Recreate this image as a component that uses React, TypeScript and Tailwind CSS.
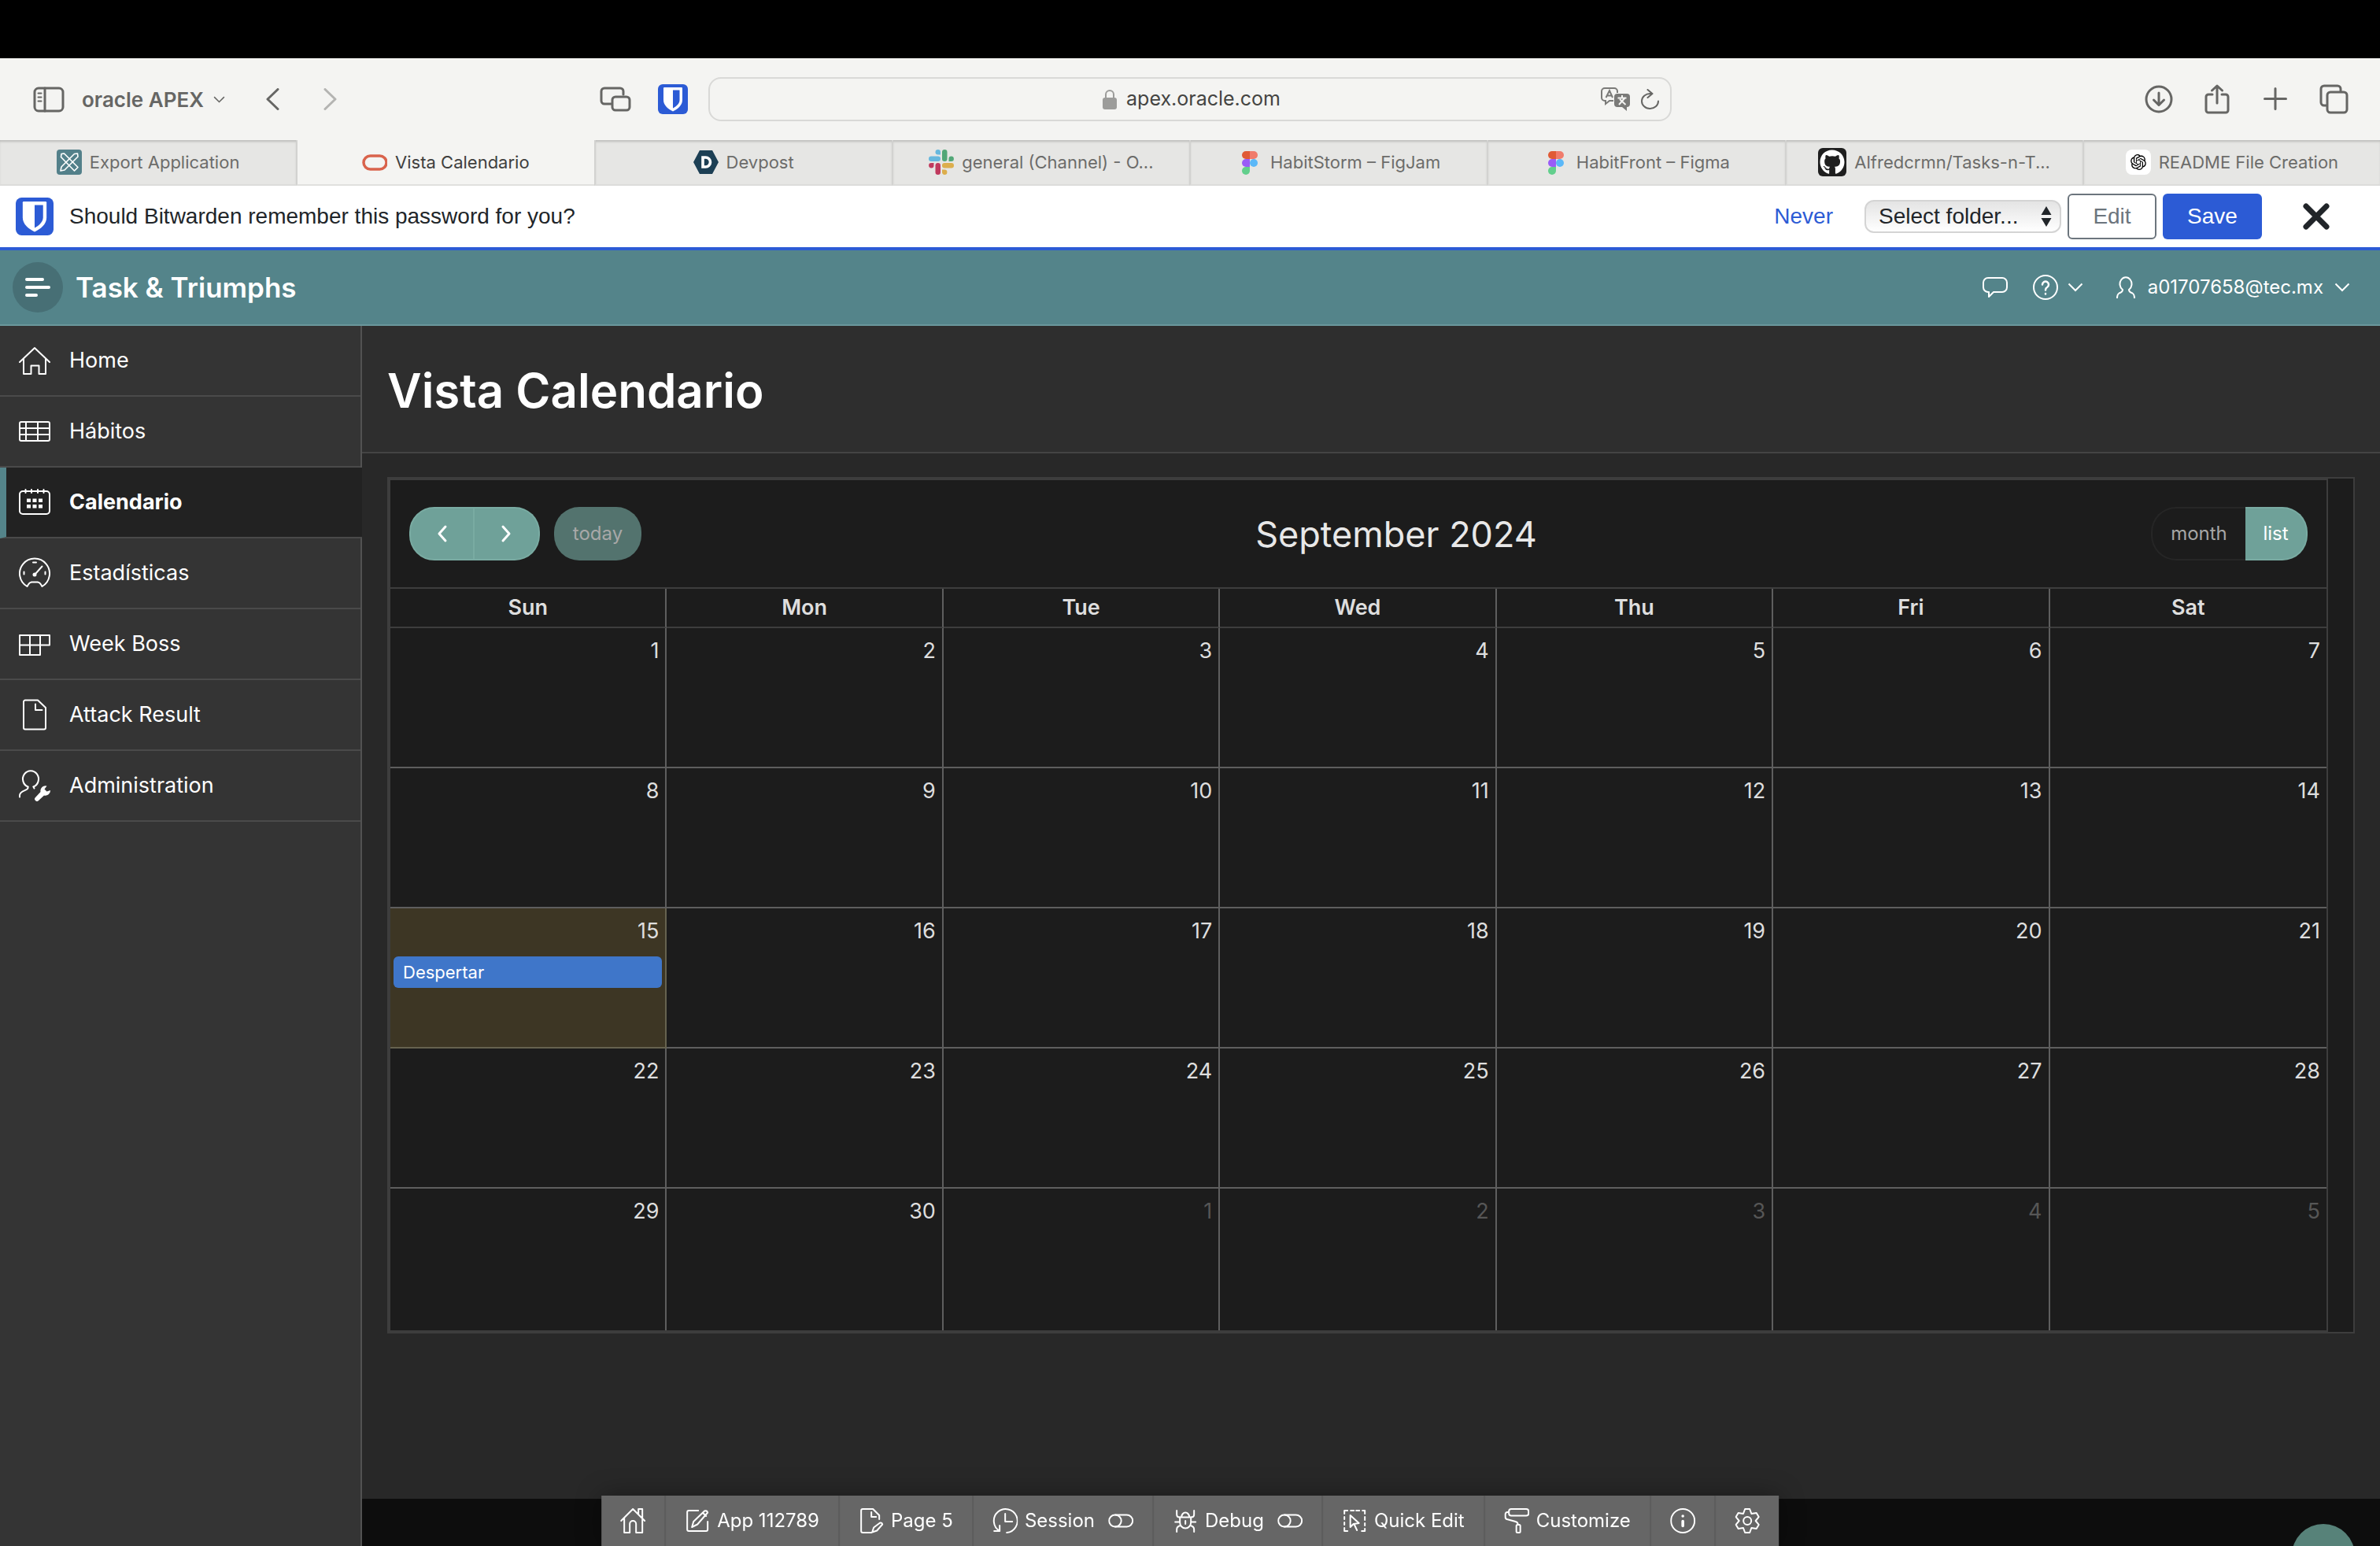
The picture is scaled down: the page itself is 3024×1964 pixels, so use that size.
import type { ReactNode } from 'react';
import { FaGithub } from 'react-icons/fa';
import { RiOpenaiFill } from 'react-icons/ri';

const navItems = [
  { label: 'Home', icon: <HomeIcon /> },
  { label: 'Hábitos', icon: <TableIcon /> },
  { label: 'Calendario', icon: <CalendarIcon />, active: true },
  { label: 'Estadísticas', icon: <GaugeIcon /> },
  { label: 'Week Boss', icon: <CardsIcon /> },
  { label: 'Attack Result', icon: <FileIcon /> },
  { label: 'Administration', icon: <UserWrenchIcon /> },
];

const browserTabs = [
  { title: 'Export Application', icon: <ApexFavicon /> },
  { title: 'Vista Calendario', icon: <OracleFavicon />, active: true },
  { title: 'Devpost', icon: <DevpostFavicon /> },
  { title: 'general (Channel) - O...', icon: <SlackFavicon /> },
  { title: 'HabitStorm – FigJam', icon: <FigmaFavicon /> },
  { title: 'HabitFront – Figma', icon: <FigmaFavicon /> },
  {
    title: 'Alfredcrmn/Tasks-n-T...',
    icon: (
      <span className="flex size-9 items-center justify-center rounded-md bg-[#1f1f1f] text-white">
        <FaGithub className="size-8" />
      </span>
    ),
  },
  {
    title: 'README File Creation',
    icon: (
      <span className="flex size-8 items-center justify-center rounded-lg bg-white text-black">
        <RiOpenaiFill className="size-6" />
      </span>
    ),
  },
];

const weekdays = ['Sun', 'Mon', 'Tue', 'Wed', 'Thu', 'Fri', 'Sat'];

const weeks = [
  [1, 2, 3, 4, 5, 6, 7],
  [8, 9, 10, 11, 12, 13, 14],
  [15, 16, 17, 18, 19, 20, 21],
  [22, 23, 24, 25, 26, 27, 28],
  [29, 30, 1, 2, 3, 4, 5],
];

/* Shared frame for line icons */
function Line({ size, width = 2, className, children }: { size: number; width?: number; className?: string; children: ReactNode }) {
  return (
    <svg
      width={size}
      height={size}
      viewBox={`0 0 ${size} ${size}`}
      fill="none"
      stroke="currentColor"
      strokeWidth={width}
      strokeLinecap="round"
      strokeLinejoin="round"
      className={className}
      aria-hidden="true"
    >
      {children}
    </svg>
  );
}

/* Sidebar icons */
function HomeIcon() {
  return (
    <Line size={40}>
      <path d="M1 22 20 4l19 18" />
      <path d="M6 18v19h9.5V26.5h10V37H34V18" />
    </Line>
  );
}

function TableIcon() {
  return (
    <Line size={40}>
      <rect x="1" y="8" width="38" height="24" rx="2" />
      <path d="M9 8v24M24 8v24M1 16h38M1 24h38" />
    </Line>
  );
}

function CalendarIcon() {
  return (
    <Line size={40}>
      <rect x="1" y="6" width="38" height="29" rx="4" />
      <path d="M8.500 4v4M16 4v4M24 4v4M31.5 4v4" />
      <path
        d="M10 15.5h5V20h-5zM17.5 15.5h5V20h-5zM25 15.5h5V20h-5zM10 23h5v4.5h-5zM17.5 23h5v4.5h-5zM25 23h5v4.5h-5z"
        fill="currentColor"
        stroke="none"
      />
    </Line>
  );
}

function GaugeIcon() {
  return (
    <Line size={40}>
      <path d="M10.5 37A19 19 0 1 1 29.5 37L28 34.5a6 6 0 0 0-4-3h-8a6 6 0 0 0-4 3z" />
      <path d="M21 21l8.5-9.5M18 6.5h4M6.5 18.5v3M33.5 18.5v3" />
      <circle cx="20" cy="22" r="1.5" fill="currentColor" />
    </Line>
  );
}

function CardsIcon() {
  return (
    <Line size={40}>
      <path d="M1 9h38v12.500H27V34H1zM14 9v25M27 9v12.500M1 21.500h26" />
    </Line>
  );
}

function FileIcon() {
  return (
    <Line size={40}>
      <path d="M24 1.5H8a2 2 0 0 0-2 2v33a2 2 0 0 0 2 2h24a2 2 0 0 0 2-2V11z" />
      <path d="M21 6.5V14h8.5" />
    </Line>
  );
}

function UserWrenchIcon() {
  return (
    <Line size={40}>
      <path d="M11.5 21.5a10 10.5 0 1 1 7 0" />
      <path d="M11.5 21.5V23c0 3.5-10.5 3-10.5 9.5v2M18.5 21.5l1 2" />
      <path
        d="M35.5 20.5a6.500 6.500 0 0 0-8 7.5l-6.500 7a2.800 2.800 0 1 0 4 4l7-6.500a6.500 6.500 0 0 0 8-6.500l-4.500 1.500-3-3z"
        fill="currentColor"
        stroke="none"
      />
    </Line>
  );
}

/* Favicons and logos */
function BitwardenLogo({ className }: { className: string }) {
  return (
    <svg viewBox="0 0 38 38" className={className} aria-hidden="true">
      <rect width="38" height="38" rx="6" fill="#2c5bd5" />
      <path d="M8 4h22a1 1 0 0 1 1 1v15c0 7-6 11.5-12 14.5C13 31.5 7 27 7 20V5a1 1 0 0 1 1-1z" fill="#fff" />
      <path d="M19 7.5h8.5V20c0 4.5-4 8-8.5 10.5z" fill="#2c5bd5" />
    </svg>
  );
}

function ApexFavicon() {
  return (
    <svg viewBox="0 0 32 32" className="size-8" aria-hidden="true">
      <rect width="32" height="32" rx="4" fill="#53808a" />
      <g fill="none" stroke="#fff" strokeWidth="1.6" strokeLinejoin="round">
        <path d="M6 5.5 9.5 5 27 22.5 22.5 27 5.5 9.5z" />
        <path d="M26.5 5 27 9 10 26l-5 1 1-5L22.5 5.5z" />
      </g>
    </svg>
  );
}

function OracleFavicon() {
  return (
    <svg viewBox="0 0 32 32" className="size-8" aria-hidden="true">
      <rect x="2" y="8" width="29" height="17" rx="8.5" fill="none" stroke="#d9634c" strokeWidth="3.5" />
    </svg>
  );
}

function DevpostFavicon() {
  return (
    <svg viewBox="0 0 32 32" className="size-8" aria-hidden="true">
      <path d="M8 1h16l8 15-8 15H8L0 16z" fill="#1c3f54" />
      <path d="M12 10h3.5a6 6 0 0 1 0 12H12z" fill="none" stroke="#fff" strokeWidth="3.6" />
    </svg>
  );
}

function SlackFavicon() {
  return (
    <svg viewBox="0 0 32 32" className="size-8" aria-hidden="true">
      <g fill="#67b8de">
        <rect x="0" y="8.5" width="15" height="6.5" rx="3.2" />
        <path d="M11.8 0A3.2 3.2 0 0 1 15 3.2v3.3h-3.2a3.2 3.2 0 0 1 0-6.5z" />
      </g>
      <g fill="#52a777">
        <rect x="17" y="0" width="6.5" height="15" rx="3.2" />
        <path d="M25.5 15v-3.2a3.2 3.2 0 1 1 3.3 3.2z" />
      </g>
      <g fill="#dcae4c">
        <rect x="17" y="17" width="15" height="6.5" rx="3.2" />
        <path d="M17 25.5h3.2a3.2 3.2 0 1 1-3.2 3.3z" />
      </g>
      <g fill="#c03a5d">
        <rect x="8.5" y="17" width="6.5" height="15" rx="3.2" />
        <path d="M6.5 17v3.2A3.2 3.2 0 1 1 3.2 17z" />
      </g>
    </svg>
  );
}

function FigmaFavicon() {
  return (
    <svg viewBox="0 0 32 32" className="size-8" aria-hidden="true">
      <path d="M16 2v10h-5a5 5 0 0 1 0-10z" fill="#e05a35" />
      <path d="M16 2h5a5 5 0 0 1 0 10h-5z" fill="#f07c6c" />
      <path d="M16 12v10h-5a5 5 0 0 1 0-10z" fill="#9a5cf7" />
      <circle cx="21" cy="17" r="5" fill="#5bb8f8" />
      <path d="M16 22v5a5 5 0 1 1-5-5z" fill="#62cf8c" />
    </svg>
  );
}

/* Developer toolbar icons */
function ToggleIcon() {
  return (
    <Line size={32}>
      <rect x="1" y="8.5" width="30" height="15" rx="7.5" />
      <path d="M9 8.5a7.5 7.5 0 0 1 0 15" />
    </Line>
  );
}

const devItems = [
  {
    name: 'Home',
    icon: (
      <Line size={32}>
        <path d="M1 16 16 1l15 15M5 12.5V31h7V20a4 4 0 0 1 8 0v11h8V12.5M23 7V1h5v11" />
      </Line>
    ),
  },
  {
    name: 'App',
    text: 'App 112789',
    icon: (
      <Line size={32}>
        <path d="M17 3H5a2 2 0 0 0-2 2v22a2 2 0 0 0 2 2h22a2 2 0 0 0 2-2V17" />
        <path d="M9 24l2-7L25 3.5q3-1 4 2L16 20.5zM23 6l4 4" />
      </Line>
    ),
  },
  {
    name: 'Page',
    text: 'Page 5',
    icon: (
      <Line size={32}>
        <path d="M16 31H5a2 2 0 0 1-2-2V3a2 2 0 0 1 2-2h13l8 8v5M16 5v6h6" />
        <path d="M17 30.5l2-6 8-6q2.5-.5 3 2l-7 8z" />
      </Line>
    ),
  },
  {
    name: 'Session',
    text: 'Session',
    toggle: true,
    icon: (
      <Line size={32}>
        <path d="M9 29A15 15 0 1 1 18 31M16 7v10h9M9 22v7H2" />
      </Line>
    ),
  },
  {
    name: 'Debug',
    text: 'Debug',
    toggle: true,
    icon: (
      <Line size={32}>
        <path d="M9 11.5h14V18a7 7.5 0 0 1-14 0zM11 11.5a5 6 0 0 1 10 0M16 16v4M3 17.5h6M23 17.5h6" />
        <path d="M5 3v5q0 3.5 4 3.5M27 3v5q0 3.5-4 3.5M5 30v-3q0-4 5-5M27 30v-3q0-4-5-5" />
      </Line>
    ),
  },
  {
    name: 'Quick Edit',
    text: 'Quick Edit',
    icon: (
      <Line size={32}>
        <path d="M3 7V3h4M11 3h4M18 3h4M26 3h3v4M29 11v4M29 19v3M29 26v3h-4M7 29H3v-4M3 21v-3M3 14v-3" />
        <path d="M10.5 9v15l4-4 7-1zM15.5 20.5l3.500 7.500" />
      </Line>
    ),
  },
  {
    name: 'Customize',
    text: 'Customize',
    icon: (
      <Line size={32}>
        <rect x="6" y="1" width="25" height="8.5" rx="3" />
        <path d="M6 5H4a2.500 2.500 0 0 0-2.500 2.500v3.500a3 3 0 0 0 2 3l11 3a4 4 0 0 1 3 4" />
        <rect x="15.500" y="21" width="5" height="10" rx="1.500" />
      </Line>
    ),
  },
  {
    name: 'Info',
    icon: (
      <Line size={32}>
        <circle cx="16" cy="16" r="15" />
        <path d="M16 16.500v6M16 10v0" strokeWidth="3.600" />
      </Line>
    ),
  },
  {
    name: 'Settings',
    icon: (
      <Line size={32}>
        <circle cx="16" cy="16" r="5" />
        <path d="M13 1h6l2.200 6 6.300-1.100 3 5.200-4 4.900 4 4.900-3 5.200-6.300-1.100L19 31h-6l-2.200-6-6.300 1.100-3-5.200 4-4.900-4-4.900 3-5.200L10.800 7z" />
      </Line>
    ),
  },
];

function Chevron({ className }: { className: string }) {
  return (
    <svg viewBox="0 0 20 12" fill="none" stroke="currentColor" strokeWidth="2" className={className} aria-hidden="true">
      <path d="M1.5 1.5 10 10l8.5-8.5" />
    </svg>
  );
}

function BrowserToolbar() {
  return (
    <div className="grid h-[104px] grid-cols-[900px_1fr_900px] items-center bg-[#f4f4f2] text-[#666664]">
      <div className="flex items-center pl-[42px] pr-[26px]">
        <button aria-label="Sidebar">
          <Line size={40} width={3}>
            <rect x="2" y="6" width="36" height="29" rx="5" />
            <path d="M15 6v29" />
            <path d="M6.5 12.5h4M6.5 17.5h4M6.5 22.5h4" strokeWidth="2" />
          </Line>
        </button>
        <button className="ml-[22px] flex items-center gap-3 text-[26px] font-semibold">
          oracle APEX
          <Chevron className="h-[9px] w-[15px]" />
        </button>
        <button aria-label="Back" className="ml-12">
          <Line size={28} width={3}>
            <path d="M19 1.5 6 14l13 12.500" />
          </Line>
        </button>
        <button aria-label="Forward" className="ml-[42px] text-[#b4b4b2]">
          <Line size={28} width={3}>
            <path d="M9 1.5 22 14 9 26.5" />
          </Line>
        </button>
        <button aria-label="Tab overview" className="ml-auto">
          <Line size={40} width={3}>
            <path d="M15 26H6a4 4 0 0 1-4-4V10a4 4 0 0 1 4-4h20a4 4 0 0 1 4 4v4" />
            <rect x="16" y="17" width="22" height="17" rx="4" />
          </Line>
        </button>
        <button aria-label="Bitwarden" className="ml-[34px]">
          <BitwardenLogo className="size-[38px]" />
        </button>
      </div>
      <div className="flex h-14 items-center rounded-2xl border-2 border-[#d9d9d7] px-3">
        <div className="w-20" />
        <div className="flex flex-1 items-center justify-center gap-3">
          <svg viewBox="0 0 18 26" className="h-[26px] w-[18px] text-[#9c9c9a]" aria-hidden="true">
            <rect y="11" width="18" height="15" rx="3" fill="currentColor" />
            <path d="M4 12V7a5 5 0 0 1 10 0v5" fill="none" stroke="currentColor" strokeWidth="2" />
          </svg>
          <input
            aria-label="Address"
            defaultValue="apex.oracle.com"
            className="field-sizing-content bg-transparent text-[25px] text-[#444442] outline-none"
          />
        </div>
        <button aria-label="Translate" className="mr-3 text-[#7a7a78]">
          <svg viewBox="0 0 38 30" className="h-[30px] w-[38px]" aria-hidden="true">
            <path
              d="M16 17h-5l-5 4v-4H5a4 4 0 0 1-4-4V5a4 4 0 0 1 4-4h12a4 4 0 0 1 4 4v2M6.5 13 11 4l4 9M8 10.5h6"
              fill="none"
              stroke="currentColor"
              strokeWidth="2"
            />
            <path d="M21 8h12a4 4 0 0 1 4 4v9a4 4 0 0 1-4 4v5l-6-5h-6a4 4 0 0 1-4-4v-9a4 4 0 0 1 4-4z" fill="currentColor" />
            <path d="M27 10v3M21.5 13.5h11M23 22l7.5-8.5M24 15l7.5 7" fill="none" stroke="#f4f4f2" strokeWidth="2" />
          </svg>
        </button>
        <button aria-label="Reload">
          <Line size={26}>
            <path d="M13 6A10.5 9.5 0 1 0 23 15.500M9.500 1l6 5-6 5" />
          </Line>
        </button>
      </div>
      <div className="flex items-center justify-end gap-9 pr-10">
        <button aria-label="Downloads">
          <Line size={38} width={3}>
            <circle cx="19" cy="19" r="16" />
            <path d="M19 11v15M12.5 20l6.5 6.5 6.5-6.5" />
          </Line>
        </button>
        <button aria-label="Share">
          <Line size={38} width={3}>
            <path d="M13 13H8a3 3 0 0 0-3 3v17a3 3 0 0 0 3 3h22a3 3 0 0 0 3-3V16a3 3 0 0 0-3-3h-5M19 24V2M12.5 8 19 2l6.5 6" />
          </Line>
        </button>
        <button aria-label="New tab">
          <Line size={38} width={3}>
            <path d="M19 5.500v26M5.500 18.500h27" />
          </Line>
        </button>
        <button aria-label="All tabs">
          <Line size={38} width={3}>
            <path d="M10 27H7a4 4 0 0 1-4-4V6a4 4 0 0 1 4-4h17a4 4 0 0 1 4 4v3" />
            <rect x="11" y="10" width="25" height="26" rx="4" />
          </Line>
        </button>
      </div>
    </div>
  );
}

function BrowserTabs() {
  return (
    <div className="flex h-[58px] bg-[#e6e6e4]">
      {browserTabs.map((tab) => (
        <a
          key={tab.title}
          href="#"
          className={
            tab.active
              ? 'flex flex-1 items-center justify-center gap-2.5 border-b-2 border-l-2 border-b-[#e0e0de] border-l-[#d2d2d0] bg-[#f4f4f2] text-[22px] text-[#40403e]'
              : 'flex flex-1 items-center justify-center gap-2.5 border-b-2 border-l-2 border-b-[#dcdcda] border-l-[#d2d2d0] text-[22px] text-[#6c6c6a] shadow-[inset_0_3px_3px_-1px_#bcbcba] first:border-l-0'
          }
        >
          {tab.icon}
          {tab.title}
        </a>
      ))}
    </div>
  );
}

function PasswordBar() {
  return (
    <div className="flex h-[82px] items-center border-b-4 border-[#2c5bd5] bg-white pl-5 pr-16 font-['Liberation_Sans',Arial,sans-serif] text-[28px] text-[#212529]">
      <BitwardenLogo className="size-12" />
      <p className="ml-5">Should Bitwarden remember this password for you?</p>
      <button className="ml-auto mr-10 text-[#2c5bd5]">Never</button>
      <div className="relative mr-2">
        <select
          aria-label="Folder"
          className="block h-[42px] w-[250px] appearance-none rounded-xl border-2 border-[#d4d4d4] bg-linear-to-b from-[#e4e4e4] to-white pl-4 text-[28px] leading-none"
        >
          <option>Select folder...</option>
        </select>
        <svg viewBox="0 0 14 26" className="pointer-events-none absolute right-3 top-2 h-[26px] w-[14px]" fill="currentColor" aria-hidden="true">
          <path d="M7 0l6.500 11H.5zM7 26l6.500-11H.5z" />
        </svg>
      </div>
      <button className="mr-2 h-[58px] w-[113px] rounded-md border-2 border-[#6c757d] text-[#6c757d]">Edit</button>
      <button className="h-[58px] w-[126px] rounded-md bg-[#2c5bd5] text-white">Save</button>
      <button aria-label="Close" className="ml-[52px]">
        <svg viewBox="0 0 34 34" className="size-[34px]" stroke="currentColor" strokeWidth="7" strokeLinecap="round" aria-hidden="true">
          <path d="M4 4l26 26M30 4 4 30" />
        </svg>
      </button>
    </div>
  );
}

function AppHeader() {
  return (
    <header className="flex h-24 items-center border-b-2 border-[#6a979b] bg-[#54848a] pl-4 pr-[38px] text-white">
      <button aria-label="Main menu" className="flex size-16 items-center justify-center rounded-full bg-[#476f75]">
        <svg viewBox="0 0 32 24" className="h-6 w-8" stroke="currentColor" strokeWidth="4" strokeLinecap="round" aria-hidden="true">
          <path d="M2 2h20M2 12h28M2 22h12" />
        </svg>
      </button>
      <a href="#" className="ml-4 text-[35px] font-semibold">
        Task &amp; Triumphs
      </a>
      <button aria-label="Feedback" className="ml-auto mr-8">
        <Line size={32}>
          <path d="M7 4h18a6 6 0 0 1 6 6v6a6 6 0 0 1-6 6H14l-6 6v-6H7a6 6 0 0 1-6-6v-6a6 6 0 0 1 6-6z" />
        </Line>
      </button>
      <button aria-label="Help" className="flex items-center gap-3">
        <Line size={32}>
          <circle cx="16" cy="16" r="15" />
          <path d="M12 12.5a4 4 0 1 1 6 3.5q-2 1-2 3.5M16 24v.5" strokeWidth="2.500" />
        </Line>
        <Chevron className="h-3 w-5" />
      </button>
      <button className="ml-10 flex items-center gap-3.5 text-2xl">
        <Line size={28}>
          <path d="M10 17a7.5 8.5 0 1 1 8 0M10 17q0 3-4.5 4.5Q3 23 3 28M18 17q0 3 4.5 4.5Q25 23 25 28" />
        </Line>
        a01707658@tec.mx
        <Chevron className="h-3 w-5" />
      </button>
    </header>
  );
}

function Calendar() {
  return (
    <section className="border-2 border-[#3d3d3d] bg-[#1c1c1c] pr-8">
      <div className="border-2 border-[#3d3d3d]">
        <div className="flex h-[136px] items-center justify-between px-6 text-2xl">
          <div className="flex gap-[18px]">
            <div className="flex text-white">
              <button aria-label="Previous" className="flex h-[68px] w-[83px] items-center justify-center rounded-l-[32px] border-2 border-[#79aba2] bg-[#6fa199]">
                <Line size={24} width={3}>
                  <path d="M16 3 8 12l8 9" />
                </Line>
              </button>
              <button aria-label="Next" className="flex h-[68px] w-[83px] items-center justify-center rounded-r-[32px] border-2 border-l-0 border-[#79aba2] bg-[#6fa199]">
                <Line size={24} width={3}>
                  <path d="M7 3l8 9-8 9" />
                </Line>
              </button>
            </div>
            <button disabled className="h-[68px] w-[111px] rounded-[32px] bg-[#53736e] text-[#a8a8a8]">
              today
            </button>
          </div>
          <h2 className="text-[45px] leading-none text-[#e8e8e8]">September 2024</h2>
          <div className="flex">
            <button className="h-[68px] w-[120px] rounded-l-[32px] border-2 border-r-0 border-[#262626] text-[#a6a6a6]">month</button>
            <button className="h-[68px] w-[79px] rounded-r-[32px] border-2 border-l-0 border-[#79aba2] bg-[#6fa199] text-white">list</button>
          </div>
        </div>
        <table className="w-full table-fixed border-separate border-spacing-0 border-t-2 border-[#3d3d3d] text-[27px] text-[#dedede]">
          <thead>
            <tr>
              {weekdays.map((day) => (
                <th key={day} className="h-[50px] border-b-2 border-r-2 border-b-[#3d3d3d] border-r-[#5e5e5e] p-0 font-semibold last:border-r-0">
                  {day}
                </th>
              ))}
            </tr>
          </thead>
          <tbody>
            {weeks.map((week, row) => (
              <tr key={row}>
                {week.map((day, col) => {
                  const today = row === 2 && col === 0;
                  const otherMonth = row === 4 && day < 8;
                  return (
                    <td
                      key={col}
                      className={
                        'border-r-2 p-0 pt-[9px] align-top last:border-r-0 ' +
                        (row < 4 ? 'h-[178px] border-b-2 ' : 'h-[180px] border-b-0 ') +
                        (today ? 'border-[#66624f] bg-[#3d3624]' : 'border-[#5e5e5e]')
                      }
                    >
                      <a href="#" className={'block pr-2 text-right leading-10 ' + (otherMonth ? 'text-[#565656]' : '')}>
                        {day}
                      </a>
                      {today && (
                        <a href="#" className="mx-1 mt-3 block h-10 rounded-md bg-[#3f76c9] pl-3 text-[22px] leading-10 text-white">
                          Despertar
                        </a>
                      )}
                    </td>
                  );
                })}
              </tr>
            ))}
          </tbody>
        </table>
      </div>
    </section>
  );
}

function DeveloperToolbar() {
  return (
    <div className="fixed bottom-0 left-1/2 flex h-16 -translate-x-1/2 bg-[#666666] text-2xl text-white shadow-[0_0_32px_rgba(0,0,0,0.35)]">
      {devItems.map((item) => (
        <button key={item.name} aria-label={item.name} className="flex items-center gap-[9px] whitespace-nowrap border-r-2 border-[#5c5c5c] px-6 last:border-r-0">
          {item.icon}
          {item.text}
          {item.toggle && (
            <span className="pl-2">
              <ToggleIcon />
            </span>
          )}
        </button>
      ))}
    </div>
  );
}

export default function App() {
  return (
    <div className="relative flex min-h-screen flex-col overflow-hidden bg-[#282828] font-[Inter,'Noto_Sans',sans-serif]">
      <div className="h-[74px] bg-black" />
      <BrowserToolbar />
      <BrowserTabs />
      <PasswordBar />
      <AppHeader />

      <div className="flex flex-1">
        {/* Side navigation */}
        <nav className="w-[460px] border-r-2 border-[#525252] bg-[#343434] text-white">
          <ul>
            {navItems.map((item) => (
              <li key={item.label}>
                <a
                  href="#"
                  className={
                    item.active
                      ? '-mr-0.5 flex h-[90px] items-center gap-6 border-b-2 border-l-8 border-b-[#4a4a4a] border-l-[#54848a] bg-[#222222] pl-4 text-[27px] font-bold'
                      : 'flex h-[90px] items-center gap-6 border-b-2 border-[#4a4a4a] pl-6 text-[27px]'
                  }
                >
                  {item.icon}
                  {item.label}
                </a>
              </li>
            ))}
          </ul>
        </nav>

        <div className="flex flex-1 flex-col">
          <div className="flex h-[162px] items-center border-b-2 border-[#444444] bg-[#2e2e2e] pl-8 pt-1">
            <h1 className="text-[60px] font-semibold text-white">Vista Calendario</h1>
          </div>
          <main className="flex-1 px-8 pt-[30px]">
            <Calendar />
          </main>
          <footer className="h-[60px] bg-[#0d0d0d]" />
        </div>
      </div>

      <button aria-label="Back to top" className="absolute -bottom-[52px] right-8 size-20 rounded-full bg-[#578279]" />
      <DeveloperToolbar />
    </div>
  );
}
